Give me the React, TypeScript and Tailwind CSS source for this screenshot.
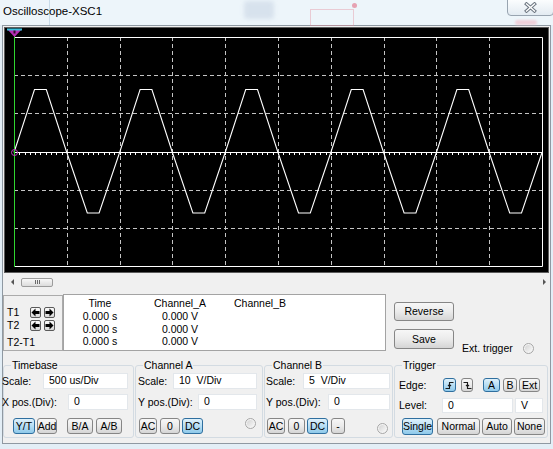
import type { ReactNode } from "react";

const SW = 543;
const SH = 244;
const L = 9;
const T = 9;
const R = 537;
const B = 238;
const DX = (R - L) / 10;
const DY = (B - T) / 6;
const CY = 124.5;

function wave() {
  const top = 61.5;
  const bot = 185;
  const pts: string[] = [];
  for (let k = 0; k < 5; k++) {
    const b = L + DX * 2 * k;
    pts.push(
      `${b},${CY}`,
      `${b + 20.5},${top}`,
      `${b + 32.3},${top}`,
      `${b + DX},${CY}`,
      `${b + DX + 20.5},${bot}`,
      `${b + DX + 32.3},${bot}`,
    );
  }
  pts.push(`${R},${CY}`);
  return pts.join(" ");
}

function Screen() {
  const vx = Array.from({ length: 9 }, (_, i) => Math.round(L + DX * (i + 1)) + 0.5);
  const hy = [1, 2, 4, 5].map((j) => Math.round(T + DY * j) + 0.5);
  const ticks = Array.from({ length: 101 }, (_, i) => Math.round(L + (DX / 10) * i) + 0.5);
  return (
    <svg width={SW} height={SH} className="block">
      {vx.map((x) => (
        <line key={`v${x}`} x1={x} y1={T} x2={x} y2={B} stroke="#c4c4c4" strokeDasharray="4 3" />
      ))}
      {hy.map((y) => (
        <line key={`h${y}`} x1={L} y1={y} x2={R} y2={y} stroke="#c4c4c4" strokeDasharray="4 3" />
      ))}
      <line x1={L} y1={CY} x2={R} y2={CY} stroke="#fff" />
      {ticks.map((x, i) => (
        <line key={`t${i}`} x1={x} y1={CY} x2={x} y2={CY + 2.5} stroke="#fff" />
      ))}
      <path d={`M${L} ${T + 0.5} H${R + 0.5} V${B + 0.5} H${L}`} fill="none" stroke="#fff" />
      <polyline points={wave()} fill="none" stroke="#fff" strokeWidth={1.1} />
      <line x1={L + 0.5} y1={7} x2={L + 0.5} y2={B + 1} stroke="#2fd52f" />
      <circle cx={L + 0.5} cy={CY} r={3} fill="none" stroke="#c03cc0" />
      <polygon points="2,1 17,1 9.5,9" fill="#b52db5" />
      <line x1={2} y1={1.5} x2={17} y2={1.5} stroke="#3cc0dc" strokeWidth={2} />
      <rect x={8.5} y={2.5} width={2} height={3} fill="#2a102a" />
    </svg>
  );
}

function Btn({ children, on = false, className = "" }: { children: ReactNode; on?: boolean; className?: string }) {
  return (
    <div
      className={`flex shrink-0 items-center justify-center rounded-[3px] border text-[10.5px] leading-none ${
        on
          ? "border-[#2f6f9f] bg-linear-to-b from-[#dff1fb] via-[#b7def4] to-[#8ec9ea]"
          : "border-[#868686] bg-linear-to-b from-[#f7f7f7] via-[#ebebeb] to-[#d5d5d5]"
      } ${className}`}
    >
      {children}
    </div>
  );
}

function Field({ children, className = "" }: { children: ReactNode; className?: string }) {
  return (
    <div
      className={`flex shrink-0 items-center whitespace-pre border border-[#e3e7eb] bg-white pl-[5px] text-[10.5px] ${className}`}
    >
      {children}
    </div>
  );
}

function Radio({ className = "" }: { className?: string }) {
  return (
    <div
      className={`flex h-[11px] w-[11px] shrink-0 items-center justify-center rounded-full border border-[#a6a6a6] bg-[#f4f4f4] ${className}`}
    >
      <div className="h-[7px] w-[7px] rounded-full bg-linear-to-br from-[#d4d4d4] to-[#f8f8f8]" />
    </div>
  );
}

function Group({ title, className = "", children }: { title: string; className?: string; children: ReactNode }) {
  return (
    <div className={`relative h-[73px] shrink-0 rounded-[3px] border border-[#d3dbe2] ${className}`}>
      <span className="absolute -top-[7px] left-[7px] bg-[#f0f0f0] px-[1px] text-[10.5px] leading-[12px]">{title}</span>
      {children}
    </div>
  );
}

function ArrowBtn({ right = false, className = "" }: { right?: boolean; className?: string }) {
  return (
    <div
      className={`flex h-[11px] w-[11px] items-center justify-center rounded-[2px] border border-[#5a5a5a] bg-linear-to-b from-[#fafafa] to-[#d8d8d8] ${className}`}
    >
      <svg width="9" height="9" viewBox="0 0 9 9" className={right ? "rotate-180" : ""}>
        <path d="M0.5 4.5 L4.5 0.5 V3 H8.5 V6 H4.5 V8.5 Z" fill="#000" />
      </svg>
    </div>
  );
}

function EdgeIcon({ falling = false }: { falling?: boolean }) {
  return (
    <svg width="9" height="10" viewBox="0 0 9 10">
      <path
        d={falling ? "M0.5 2.5H4.5V8.5H8.5 M3 5 L4.5 6.5 L6 5" : "M0.5 8.5H4.5V2.5H8.5 M3 6 L4.5 4.5 L6 6"}
        fill="none"
        stroke="#1a1a1a"
        strokeWidth={1.1}
      />
    </svg>
  );
}

export default function App() {
  return (
    <div className="relative h-[449px] w-[553px] overflow-hidden bg-[#e3eef6] font-['Liberation_Sans',Arial,sans-serif] text-black">
      {/* faint schematic seen through the glass frame */}
      <div className="pointer-events-none absolute left-0 top-0 h-[25px] w-[553px] bg-[#edf5fa]" />
      <div className="pointer-events-none absolute left-[244px] top-[1px] h-[18px] w-[30px] rounded-[3px] bg-[#b7c6da] opacity-40 blur-[2px]" />
      <div className="pointer-events-none absolute left-[310px] top-[9px] h-[17px] w-[44px] border border-[#e48b9c] opacity-40" />
      <div className="pointer-events-none absolute left-[352px] top-[3px] h-[5px] w-[5px] rounded-full bg-[#e0506a] opacity-50" />
      <div className="pointer-events-none absolute left-[49px] top-0 h-[25px] w-[1px] bg-[#c9dbe9]" />
      <div className="pointer-events-none absolute left-[515px] top-[20px] h-[5px] w-[22px] rounded-full bg-[#f2b9c6] opacity-60 blur-[1px]" />

      <div className="relative flex h-[25px] items-start pl-[3px] pt-[4px] text-[11.5px] leading-[14px]">
        Oscilloscope-XSC1
      </div>

      <div className="absolute -right-[1px] -top-[1px] flex h-[17px] w-[47px] justify-center rounded-b-[4px] border border-[#98a4b0] bg-linear-to-b from-[#fbfdfe] to-[#e3ebf2] pt-[2px]">
        <svg width="13" height="11" viewBox="0 0 13 11">
          <path d="M2.5 2 L10.5 9 M10.5 2 L2.5 9" stroke="#6d7782" strokeWidth={3.4} strokeLinecap="square" />
          <path d="M2.5 2 L10.5 9 M10.5 2 L2.5 9" stroke="#ffffff" strokeWidth={1.4} strokeLinecap="square" />
        </svg>
      </div>

      <div className="mx-[2px] flex h-[419px] flex-col border border-[#8f99a2] bg-[#f0f0f0]">
        <div className="mx-[1px] mt-[1px] border border-[#5c5c5c] bg-black">
          <Screen />
        </div>

        <div className="flex h-[18px] items-center">
          <div className="ml-[8px] h-0 w-0 border-y-[3px] border-r-[3px] border-y-transparent border-r-[#555]" />
          <div className="ml-[7px] flex h-[9px] w-[32px] items-center justify-center gap-[1px] rounded-[2px] border border-[#9c9c9c] bg-linear-to-b from-[#f8f8f8] to-[#dcdcdc]">
            <div className="h-[4px] w-[1px] bg-[#6a6a6a]" />
            <div className="h-[4px] w-[1px] bg-[#6a6a6a]" />
            <div className="h-[4px] w-[1px] bg-[#6a6a6a]" />
          </div>
          <div className="ml-auto mr-[4px] h-0 w-0 border-y-[3px] border-l-[3px] border-y-transparent border-l-[#555]" />
        </div>

        <div className="mt-[3px] flex h-[57px] items-start text-[10.5px]">
          <div className="mt-[1px] flex h-[56px] w-[60px] shrink-0 flex-col border border-[#ababab] pt-[10px]">
            <div className="flex h-[13px] items-center pl-[3px]">
              <span className="w-[23px] leading-none">T1</span>
              <ArrowBtn />
              <ArrowBtn right className="ml-[3px]" />
            </div>
            <div className="flex h-[13px] items-center pl-[3px]">
              <span className="w-[23px] leading-none">T2</span>
              <ArrowBtn />
              <ArrowBtn right className="ml-[3px]" />
            </div>
            <div className="mt-[4px] flex h-[13px] items-center pl-[3px] leading-none">T2-T1</div>
          </div>
          <div className="h-[57px] w-[323px] shrink-0 border border-[#a3a3a3] bg-white pt-[1px]">
            <div className="flex h-[14px] items-center leading-none">
              <span className="w-[72px] text-center">Time</span>
              <span className="w-[88px] text-center">Channel_A</span>
              <span className="w-[72px] text-center">Channel_B</span>
            </div>
            {[0, 1, 2].map((r) => (
              <div key={r} className="flex h-[12.5px] items-center leading-none">
                <span className="w-[72px] text-center">0.000 s</span>
                <span className="w-[88px] text-center">0.000 V</span>
              </div>
            ))}
          </div>
          <div className="ml-[8px] flex w-[60px] shrink-0 flex-col">
            <Btn className="mt-[8px] h-[19px] w-[60px]">Reverse</Btn>
            <Btn className="mt-[8px] h-[20px] w-[60px]">Save</Btn>
          </div>
          <div className="ml-[8px] mt-[49px] flex items-center">
            <span className="w-[61px] leading-none">Ext. trigger</span>
            <Radio />
          </div>
        </div>

        <div className="mt-[14px] flex text-[10.5px]">
          <Group title="Timebase" className="w-[131px]">
            <div className="flex flex-col pr-[5px] pt-[7px]">
              <div className="flex h-[16px] items-center">
                <span className="-ml-[2px] leading-none">Scale:</span>
                <Field className="ml-auto h-[16px] w-[85px]">500 us/Div</Field>
              </div>
              <div className="mt-[5px] flex h-[16px] items-center">
                <span className="-ml-[2px] leading-none">X pos.(Div):</span>
                <Field className="ml-auto h-[16px] w-[60px]">0</Field>
              </div>
              <div className="mt-[8px] flex h-[16px] items-stretch">
                <Btn on className="ml-[9px] w-[22px]">Y/T</Btn>
                <Btn className="ml-[2px] w-[20px]">Add</Btn>
                <Btn className="ml-[10px] w-[26px]">B/A</Btn>
                <Btn className="ml-[3px] w-[26px]">A/B</Btn>
              </div>
            </div>
          </Group>

          <Group title="Channel A" className="ml-[1px] w-[128px]">
            <div className="flex flex-col pl-[2px] pr-[5px] pt-[7px]">
              <div className="flex h-[16px] items-center">
                <span className="leading-none">Scale:</span>
                <Field className="ml-auto h-[16px] w-[84px]">10  V/Div</Field>
              </div>
              <div className="mt-[5px] flex h-[16px] items-center">
                <span className="leading-none">Y pos.(Div):</span>
                <Field className="ml-auto h-[16px] w-[59px]">0</Field>
              </div>
              <div className="mt-[8px] flex h-[16px] items-start">
                <Btn className="ml-[1px] h-[16px] w-[18px]">AC</Btn>
                <Btn className="ml-[3px] h-[16px] w-[20px]">0</Btn>
                <Btn on className="ml-[2px] h-[16px] w-[21px]">DC</Btn>
                <Radio className="ml-[42px]" />
              </div>
            </div>
          </Group>

          <Group title="Channel B" className="ml-[1px] w-[129px]">
            <div className="flex flex-col pl-[1px] pr-[2px] pt-[7px]">
              <div className="flex h-[16px] items-center">
                <span className="leading-none">Scale:</span>
                <Field className="ml-auto h-[16px] w-[87px]">5  V/Div</Field>
              </div>
              <div className="mt-[5px] flex h-[16px] items-center">
                <span className="leading-none">Y pos.(Div):</span>
                <Field className="ml-auto h-[16px] w-[62px]">0</Field>
              </div>
              <div className="mt-[8px] flex h-[16px] items-start">
                <Btn className="ml-[1px] h-[16px] w-[18px]">AC</Btn>
                <Btn className="ml-[3px] h-[16px] w-[17px]">0</Btn>
                <Btn on className="ml-[2px] h-[16px] w-[21px]">DC</Btn>
                <Btn className="ml-[3px] h-[16px] w-[14px]">-</Btn>
                <Radio className="ml-[32px] mt-[5px]" />
              </div>
            </div>
          </Group>

          <Group title="Trigger" className="ml-[1px] w-[154px]">
            <div className="flex flex-col pt-[12px]">
              <div className="flex h-[14px] items-stretch pl-[4px]">
                <span className="flex w-[44px] items-center leading-none">Edge:</span>
                <Btn on className="w-[13px]">
                  <EdgeIcon />
                </Btn>
                <Btn className="ml-[5px] w-[12px]">
                  <EdgeIcon falling />
                </Btn>
                <Btn on className="ml-[10px] w-[17px]">A</Btn>
                <Btn className="ml-[3px] w-[14px]">B</Btn>
                <Btn className="ml-[2px] w-[21px]">Ext</Btn>
              </div>
              <div className="mt-[6px] flex h-[15px] items-stretch pl-[4px]">
                <span className="flex w-[43px] items-center leading-none">Level:</span>
                <Field className="w-[71px]">0</Field>
                <Field className="ml-[2px] w-[28px]">V</Field>
              </div>
              <div className="mt-[5px] flex h-[17px] items-stretch pl-[7px]">
                <Btn on className="w-[31px]">Single</Btn>
                <Btn className="ml-[4px] w-[43px]">Normal</Btn>
                <Btn className="ml-[2px] w-[30px]">Auto</Btn>
                <Btn className="ml-[2px] w-[31px]">None</Btn>
              </div>
            </div>
          </Group>
        </div>
      </div>
    </div>
  );
}
